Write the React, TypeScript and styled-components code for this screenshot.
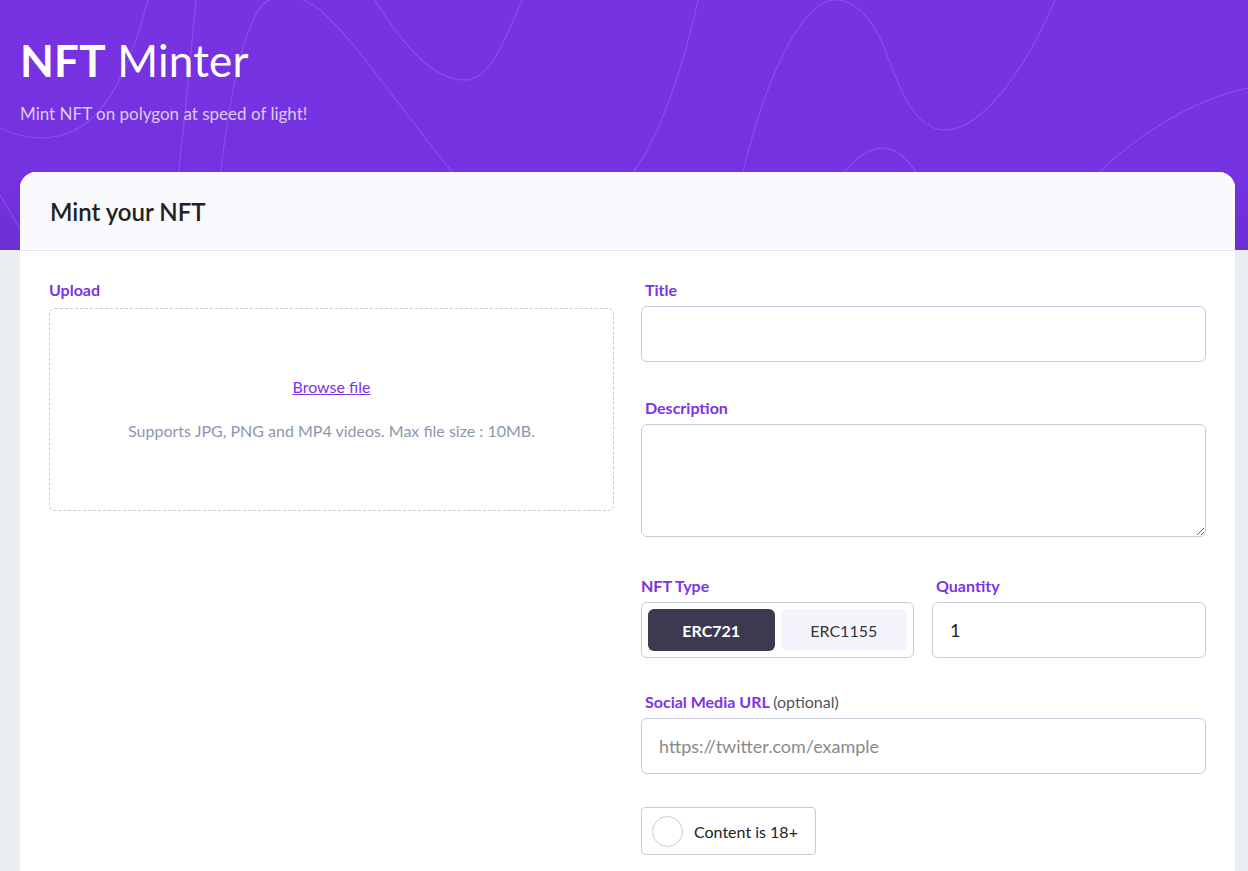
import React from "react";
import styled, { createGlobalStyle } from "styled-components";

const Global = createGlobalStyle`
  html, body { margin: 0; padding: 0; }
  body {
    font-family: "Lato", "Noto Sans", sans-serif;
    background: #e9edf0;
    color: #222;
  }
  * { box-sizing: border-box; }
`;

const Page = styled.div`
  position: relative;
  min-height: 871px;
  background: linear-gradient(to bottom, #7733e1 0px, #7532e0 180px, #6d2fd4 250px, #e9edf0 250px, #e9edf0 100%);
  overflow: hidden;
`;

const Waves = styled.svg`
  position: absolute;
  left: 0;
  top: 0;
  width: 1248px;
  height: 250px;
  pointer-events: none;
`;

const Hero = styled.header`
  position: relative;
  padding: 33px 20px 0 20px;
  height: 172px;
  color: #fff;
`;

const Title = styled.h1`
  margin: 0;
  font-size: 44px;
  font-weight: 400;
  line-height: 54px;
  letter-spacing: 0.2px;
  b { font-weight: 700; }
`;

const Subtitle = styled.p`
  margin: 16px 0 0 0;
  font-size: 17px;
  color: #dccbf7;
`;

const Card = styled.section`
  position: relative;
  margin: 0 13px 0 20px;
  background: #fff;
  border-radius: 16px 16px 0 0;
  min-height: 699px;
`;

const CardHead = styled.div`
  height: 79px;
  padding: 0 30px;
  display: flex;
  align-items: center;
  background: #f9f9fe;
  border-radius: 16px 16px 0 0;
  border-bottom: 1px solid #e3e3ea;
  font-size: 24px;
  font-weight: 600;
  color: #222;
`;

const CardBody = styled.div`
  display: grid;
  grid-template-columns: 565px 565px;
  column-gap: 27px;
  padding: 29px 29px 20px 29px;
`;

const Column = styled.div`
  display: flex;
  flex-direction: column;
`;

const Field = styled.div<{ $gap?: number }>`
  display: flex;
  flex-direction: column;
  margin-bottom: ${(p) => p.$gap ?? 0}px;
`;

const Label = styled.label<{ $indent?: boolean }>`
  font-size: 16px;
  font-weight: 700;
  color: #7b34e6;
  line-height: 20px;
  margin-bottom: 6px;
  padding-left: ${(p) => (p.$indent ? 4 : 0)}px;
`;

const Optional = styled.span`
  font-weight: 400;
  color: #555;
  font-size: 16px;
`;

const DropZone = styled.div`
  margin-top: 2px;
  height: 203px;
  border: 1px dashed #c9c9dc;
  border-radius: 6px;
  display: flex;
  flex-direction: column;
  align-items: center;
  padding-top: 67px;
`;

const Browse = styled.a`
  font-size: 16px;
  color: #7b34e6;
  text-decoration: underline;
  line-height: 22px;
  cursor: pointer;
`;

const Hint = styled.div`
  margin-top: 22px;
  font-size: 16px;
  color: #8d95b1;
  line-height: 22px;
`;

const Input = styled.input`
  height: 56px;
  border: 1px solid #c9c9dc;
  border-radius: 6px;
  padding: 0 17px;
  font-family: inherit;
  font-size: 18px;
  color: #222;
  outline: none;
  &::placeholder { color: #8a8a8a; }
`;

const TextArea = styled.textarea`
  height: 113px;
  border: 1px solid #c9c9dc;
  border-radius: 6px;
  padding: 12px 17px;
  font-family: inherit;
  font-size: 18px;
  outline: none;
  resize: vertical;
`;

const Row = styled.div`
  display: grid;
  grid-template-columns: 273px 274px;
  column-gap: 18px;
  margin-bottom: 34px;
`;

const Toggle = styled.div`
  height: 56px;
  border: 1px solid #c9c9dc;
  border-radius: 6px;
  padding: 6px;
  display: flex;
  gap: 6px;
`;

const ToggleButton = styled.button<{ $active?: boolean }>`
  flex: 1;
  border: none;
  border-radius: 6px;
  font-family: inherit;
  font-size: 16px;
  font-weight: ${(p) => (p.$active ? 700 : 400)};
  background: ${(p) => (p.$active ? "#3d3950" : "#f4f4fd")};
  color: ${(p) => (p.$active ? "#fff" : "#333")};
  cursor: pointer;
`;

const Check = styled.label`
  align-self: flex-start;
  height: 48px;
  border: 1px solid #c9c9dc;
  border-radius: 4px;
  padding: 0 17px 0 10px;
  display: flex;
  align-items: center;
  gap: 11px;
  font-size: 16px;
  color: #222;
`;

const Circle = styled.span`
  width: 31px;
  height: 31px;
  border-radius: 50%;
  border: 1px solid #c9c9dc;
  background: #fff;
`;

export default function App() {
  return (
    <>
      <Global />
      <Page>
        <Waves viewBox="0 0 1248 250" fill="none">
          <g stroke="rgba(255,255,255,0.13)" strokeWidth="1.3">
            <path d="M0 128 C 30 142, 70 145, 100 110 C 125 80, 140 30, 148 0" />
            <path d="M196 0 C 188 80, 180 180, 168 250" />
            <path d="M212 250 C 222 150, 235 40, 262 5 C 280 -10, 300 -5, 320 10 C 360 45, 400 110, 455 175" />
            <path d="M375 0 C 400 40, 430 80, 465 80 C 490 80, 505 40, 522 0" />
            <path d="M0 195 C 8 208, 15 220, 22 232" />
            <path d="M698 0 C 685 60, 660 140, 630 176" />
            <path d="M742 176 C 760 100, 790 20, 825 2 C 845 -6, 870 10, 885 50 C 900 90, 915 130, 945 130 C 985 130, 1030 60, 1055 0" />
            <path d="M842 175 C 855 158, 870 148, 882 148 C 898 148, 910 162, 918 175" />
            <path d="M1096 176 C 1130 140, 1190 100, 1248 88" />
          </g>
        </Waves>
        <Hero>
          <Title><b>NFT</b> Minter</Title>
          <Subtitle>Mint NFT on polygon at speed of light!</Subtitle>
        </Hero>
        <Card>
          <CardHead>Mint your NFT</CardHead>
          <CardBody>
            <Column>
              <Field>
                <Label>Upload</Label>
                <DropZone>
                  <Browse>Browse file</Browse>
                  <Hint>Supports JPG, PNG and MP4 videos. Max file size : 10MB.</Hint>
                </DropZone>
              </Field>
            </Column>
            <Column>
              <Field $gap={36}>
                <Label $indent>Title</Label>
                <Input />
              </Field>
              <Field $gap={39}>
                <Label $indent>Description</Label>
                <TextArea />
              </Field>
              <Row>
                <Field>
                  <Label>NFT Type</Label>
                  <Toggle>
                    <ToggleButton $active>ERC721</ToggleButton>
                    <ToggleButton>ERC1155</ToggleButton>
                  </Toggle>
                </Field>
                <Field>
                  <Label $indent>Quantity</Label>
                  <Input defaultValue="1" />
                </Field>
              </Row>
              <Field $gap={33}>
                <Label $indent>Social Media URL <Optional>(optional)</Optional></Label>
                <Input placeholder="https://twitter.com/example" />
              </Field>
              <Check>
                <Circle />
                Content is 18+
              </Check>
            </Column>
          </CardBody>
        </Card>
      </Page>
    </>
  );
}
